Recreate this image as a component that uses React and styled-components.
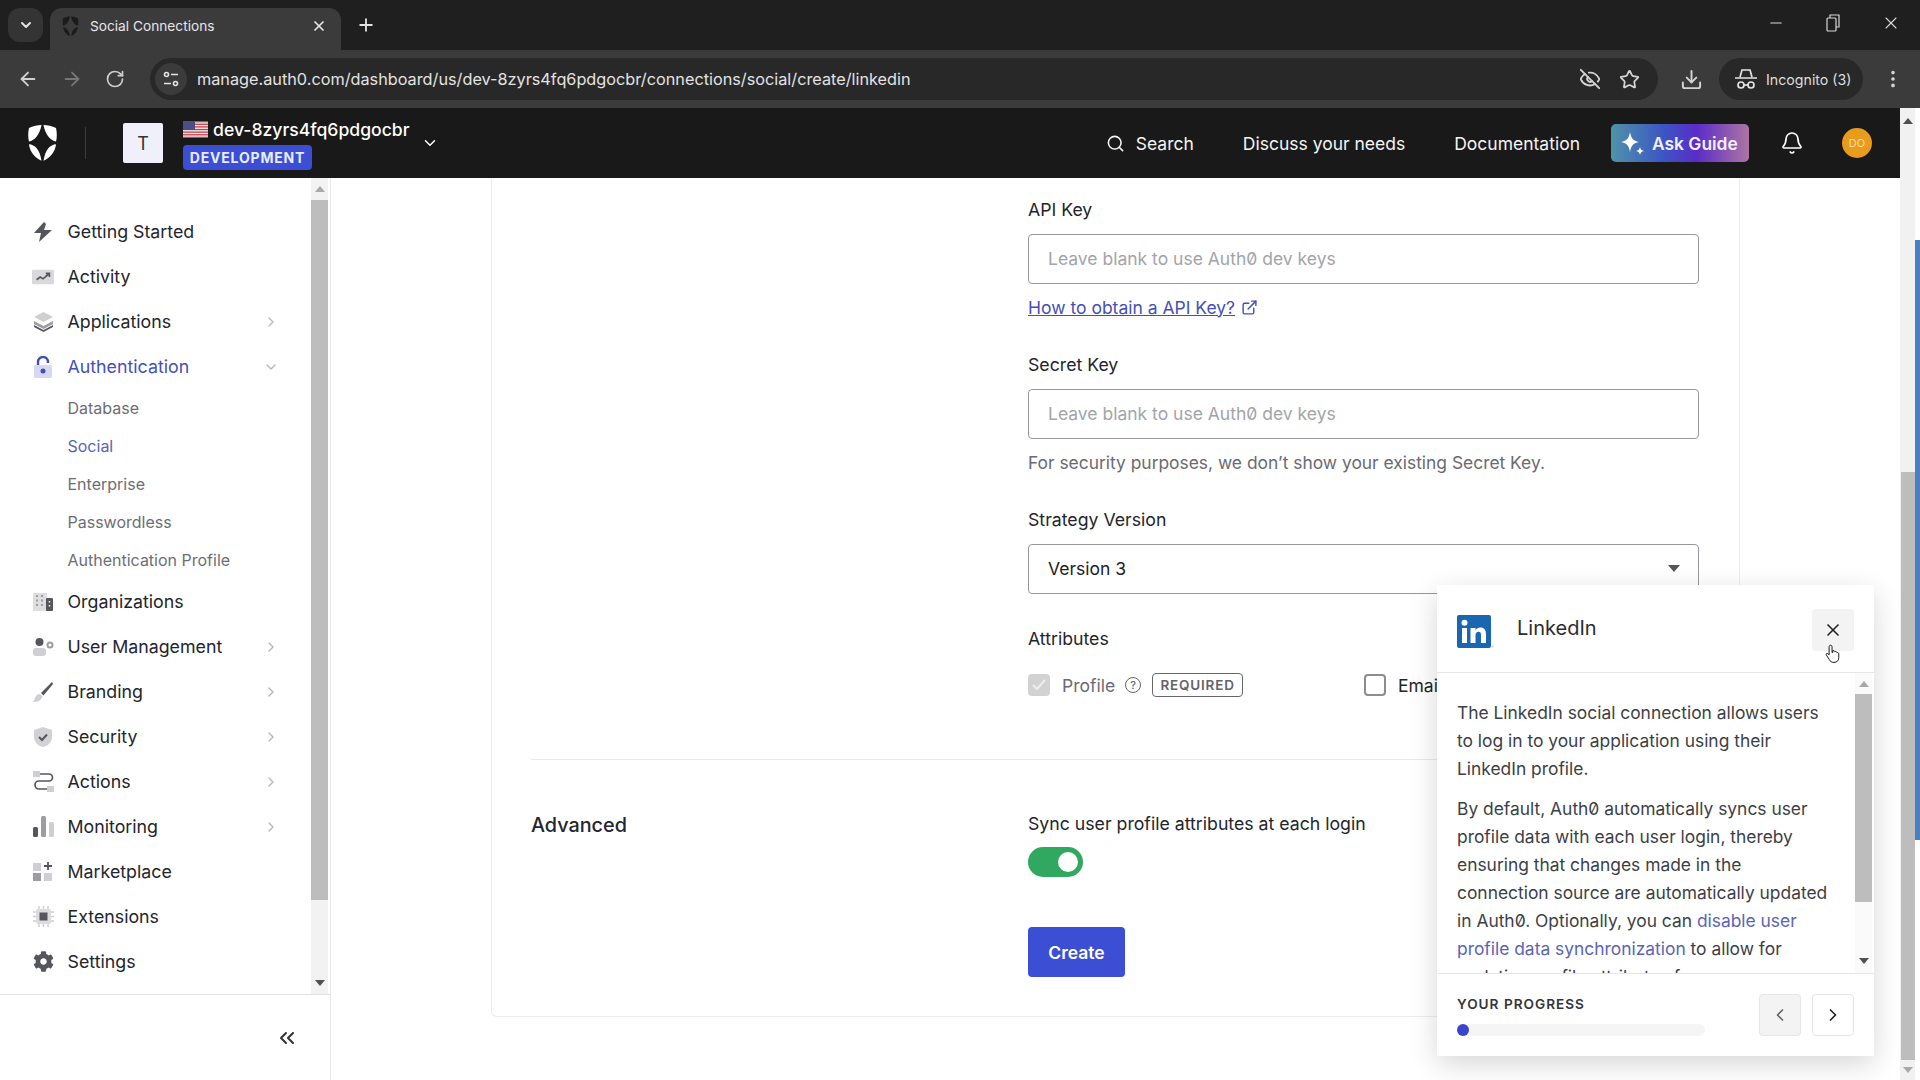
import React from "react";
import styled, { createGlobalStyle } from "styled-components";
import {
  ArrowLeft,
  ArrowRight,
  Bell,
  ChevronDown,
  ChevronLeft,
  ChevronRight,
  ChevronsLeft,
  Download,
  ExternalLink,
  EyeOff,
  Minus,
  MoreVertical,
  Plus,
  RotateCw,
  Search,
  Star,
  X,
} from "lucide-react";
import { FaCog } from "react-icons/fa";

const GlobalStyle = createGlobalStyle`
  html, body {
    margin: 0;
    padding: 0;
    background: #fff;
    overflow: hidden;
  }
  * {
    box-sizing: border-box;
  }
  body {
    font-family: Inter, "Liberation Sans", sans-serif;
    color: #1e212a;
    font-feature-settings: "zero";
  }
`;

const Page = styled.div`
  width: 1920px;
  height: 1080px;
  display: flex;
  flex-direction: column;
  overflow: hidden;
`;

/* browser chrome */
const TabStrip = styled.div`
  height: 50px;
  background: #1f1f1f;
  display: flex;
  align-items: flex-end;
  padding-left: 8px;
  color: #e3e3e3;
`;

const TabMenu = styled.div`
  width: 35px;
  height: 34px;
  margin-bottom: 8px;
  border-radius: 12px;
  background: #343434;
  display: flex;
  align-items: center;
  justify-content: center;
`;

const Tab = styled.div`
  width: 291px;
  height: 42px;
  margin-left: 7px;
  padding: 0 14px 6px 12px;
  background: #3b3b3b;
  border-radius: 12px 12px 0 0;
  display: flex;
  align-items: center;
  font-size: 13.7px;
  gap: 11px;
  color: #e6e6e6;
`;

const TabTitle = styled.span`
  flex: 1;
`;

const NewTab = styled.div`
  margin: 0 0 15px 15px;
  display: flex;
`;

const WindowButtons = styled.div`
  margin-left: auto;
  display: flex;
  align-items: center;
  gap: 41px;
  padding: 0 19px 17px 0;
`;

const Toolbar = styled.div`
  height: 58px;
  background: #3b3b3b;
  display: flex;
  align-items: center;
  padding: 0 0 0 17px;
  color: #d0d0d0;
`;

const NavIcons = styled.div`
  display: flex;
  align-items: center;
  gap: 22px;
  width: 133px;
`;

const Omnibox = styled.div`
  width: 1508px;
  height: 42px;
  border-radius: 21px;
  background: #282828;
  display: flex;
  align-items: center;
  padding: 0 18px 0 5px;
  color: #e3e3e3;
`;

const SiteButton = styled.div`
  width: 32px;
  height: 32px;
  border-radius: 50%;
  background: #3b3b3b;
  display: flex;
  align-items: center;
  justify-content: center;
  margin-right: 10px;
`;

const Url = styled.span`
  flex: 1;
  font-feature-settings: normal;
  font-size: 16.25px;
  color: #e3e3e3;
`;

const OmniIcons = styled.div`
  display: flex;
  align-items: center;
  gap: 18px;
`;

const ToolDownload = styled.div`
  margin-left: 22px;
  display: flex;
`;

const IncognitoPill = styled.div`
  width: 144px;
  height: 42px;
  margin-left: 16px;
  border-radius: 21px;
  background: #282828;
  display: flex;
  align-items: center;
  gap: 8px;
  padding-left: 15px;
  font-size: 14.2px;
  color: #dedede;
`;

const ToolMenu = styled.div`
  margin-left: 19px;
  display: flex;
`;

/* app frame */
const Workspace = styled.div`
  flex: 1;
  display: flex;
  min-height: 0;
`;

const Frame = styled.div`
  flex: 1;
  display: flex;
  flex-direction: column;
  min-width: 0;
`;

const AppBar = styled.header`
  height: 70px;
  background: #191919;
  display: flex;
  align-items: center;
  padding: 0 28px 0 27px;
  color: #fff;
`;

const BarDivider = styled.div`
  width: 1px;
  height: 32px;
  background: #3c3c3c;
  margin: 0 37px 0 27px;
`;

const TenantBox = styled.div`
  width: 40px;
  height: 40px;
  background: #f0f0fa;
  border-radius: 2px;
  color: #333;
  font-size: 18px;
  display: flex;
  align-items: center;
  justify-content: center;
  margin-right: 20px;
`;

const TenantInfo = styled.div`
  display: flex;
  flex-direction: column;
  gap: 5px;
  margin-top: 3px;
`;

const TenantName = styled.div`
  display: flex;
  align-items: center;
  gap: 5px;
  font-size: 17.6px;
  font-weight: 500;
  line-height: 20px;
`;

const EnvBadge = styled.div`
  width: 129px;
  height: 25px;
  background: #3c4fd4;
  border-radius: 4px;
  font-size: 14px;
  font-weight: 700;
  letter-spacing: 0.8px;
  color: #e9ecff;
  display: flex;
  align-items: center;
  justify-content: center;
`;

const TenantChevron = styled.div`
  margin-left: 11px;
  display: flex;
`;

const BarRight = styled.div`
  margin-left: auto;
  display: flex;
  align-items: center;
`;

const BarLink = styled.div`
  display: flex;
  align-items: center;
  gap: 11px;
  font-size: 17.5px;
  font-weight: 400;
  margin-right: ${(p) => p.$gap}px;
  color: #f4f4f4;
`;

const AskGuide = styled.div`
  width: 138px;
  height: 38px;
  border-radius: 5px;
  background: linear-gradient(90deg, #4f93a9 0%, #3c55c4 38%, #5a2cc8 62%, #ad75a3 100%);
  display: flex;
  align-items: center;
  gap: 6px;
  padding-left: 9px;
  font-size: 17.4px;
  font-weight: 600;
  color: #f2eefc;
  margin-right: 31px;
`;

const BellWrap = styled.div`
  display: flex;
  margin-right: 38px;
`;

const Avatar = styled.div`
  width: 30px;
  height: 30px;
  border-radius: 50%;
  background: #e89b1c;
  color: #f5d9a0;
  font-size: 11px;
  display: flex;
  align-items: center;
  justify-content: center;
`;

const Body = styled.div`
  flex: 1;
  display: flex;
  min-height: 0;
  position: relative;
`;

/* sidebar */
const Sidebar = styled.aside`
  width: 331px;
  flex: none;
  border-right: 1px solid #e8e8e8;
  display: flex;
  flex-direction: column;
`;

const SideScroll = styled.div`
  height: 817px;
  display: flex;
  border-bottom: 1px solid #e2e2e2;
  overflow: hidden;
`;

const Nav = styled.nav`
  flex: 1;
  padding: 31px 32px 0 32px;
  min-width: 0;
`;

const NavRow = styled.div`
  height: 45px;
  display: flex;
  align-items: center;
  gap: 13.5px;
  font-size: 17.8px;
  color: ${(p) => (p.$active ? "#4450b8" : "#23252d")};
`;

const NavLabel = styled.span`
  flex: 1;
`;

const SubRow = styled.div`
  height: 38px;
  padding-left: 35.5px;
  display: flex;
  align-items: center;
  font-size: 16px;
  color: ${(p) => (p.$active ? "#5a65b5" : "#6d6e75")};
`;

const IconBox = styled.span`
  width: 22px;
  height: 22px;
  flex: none;
  display: flex;
  align-items: center;
  justify-content: center;
  color: #55565c;
`;

const SideTrack = styled.div`
  width: 17px;
  margin-right: 2px;
  flex: none;
  background: #f2f2f2;
  display: flex;
  flex-direction: column;
  align-items: center;
`;

const TrackEnd = styled.div`
  height: ${(p) => p.$h}px;
  flex: none;
  display: flex;
  align-items: center;
  justify-content: center;
`;

const Thumb = styled.div`
  width: 100%;
  height: ${(p) => p.$h}px;
  background: #bdbdbd;
  flex: none;
`;

const TrackGap = styled.div`
  flex: 1;
`;

const Arrow = styled.span`
  width: 0;
  height: 0;
  border-left: ${(p) => p.$size || 5}px solid transparent;
  border-right: ${(p) => p.$size || 5}px solid transparent;
  ${(p) => (p.$up ? "border-bottom" : "border-top")}: ${(p) => (p.$size || 5) + 1}px solid ${(p) => p.$color || "#505050"};
`;

const SideFooter = styled.div`
  flex: 1;
  display: flex;
  align-items: center;
  justify-content: flex-end;
  padding-right: 31px;
  color: #333;
`;

/* main */
const Main = styled.main`
  flex: 1;
  min-width: 0;
  padding: 0 160px;
  overflow: hidden;
`;

const Card = styled.section`
  height: 839px;
  border: 1px solid #ececec;
  border-top: 0;
  border-radius: 0 0 6px 6px;
  padding: 0 39px 0 39px;
`;

const FormGrid = styled.div`
  display: grid;
  grid-template-columns: 497px 671px;
`;

const FieldStack = styled.div`
  grid-column: 2;
  padding-top: 20px;
`;

const Label = styled.div`
  font-size: 17.7px;
  line-height: 24px;
  margin-bottom: ${(p) => p.$mb ?? 12}px;
  color: #23252d;
`;

const Input = styled.input`
  display: block;
  width: 100%;
  height: 50px;
  padding: 0 19px 2px;
  border: 1px solid #97979d;
  border-radius: 4px;
  font: 400 17.5px Inter, sans-serif;
  font-feature-settings: "zero";
  background: #fff;
  outline: none;
  &::placeholder {
    color: #a3a4aa;
    opacity: 1;
  }
`;

const LinkRow = styled.a`
  display: flex;
  align-items: center;
  gap: 6px;
  height: 24px;
  margin-top: 11px;
  margin-bottom: 34px;
  font-size: 17.5px;
  color: #4450b8;
`;

const LinkText = styled.span`
  text-decoration: underline;
`;

const Help = styled.div`
  height: 24px;
  margin-top: 12px;
  margin-bottom: 33px;
  font-size: 17.4px;
  line-height: 24px;
  color: #6a6b73;
`;

const SelectBox = styled.div`
  height: 50px;
  padding: 0 18px 2px 19px;
  border: 1px solid #97979d;
  border-radius: 4px;
  display: flex;
  align-items: center;
  justify-content: space-between;
  font-size: 17.5px;
  margin-bottom: 33px;
`;

const CheckGrid = styled.div`
  display: grid;
  grid-template-columns: 336px 1fr;
  margin-top: 22px;
  height: 36px;
`;

const CheckItem = styled.div`
  display: flex;
  align-items: center;
  height: 24px;
  font-size: 17.5px;
  color: ${(p) => (p.$muted ? "#6b6c73" : "#23252d")};
`;

const CheckBox = styled.span`
  width: 22px;
  height: 22px;
  border-radius: 4px;
  margin-right: 12px;
  display: flex;
  align-items: center;
  justify-content: center;
  background: ${(p) => (p.$checked ? "#d2d2d2" : "#fff")};
  border: 2px solid ${(p) => (p.$checked ? "#d2d2d2" : "#8d8d8d")};
`;

const HelpDot = styled.span`
  width: 16px;
  height: 16px;
  margin: 0 11px 0 10px;
  border: 1.5px solid #66676e;
  border-radius: 50%;
  font-size: 11px;
  font-weight: 500;
  display: flex;
  align-items: center;
  justify-content: center;
  color: #66676e;
`;

const ReqTag = styled.span`
  width: 91px;
  height: 24px;
  border: 1px solid #66676e;
  border-radius: 4px;
  font-size: 13.5px;
  font-weight: 600;
  letter-spacing: 0.8px;
  color: #62636b;
  display: flex;
  align-items: center;
  justify-content: center;
`;

const Rule = styled.div`
  height: 1px;
  background: #e9e9e9;
  margin-top: 50px;
`;

const AdvancedRow = styled.div`
  display: grid;
  grid-template-columns: 497px 671px;
  padding-top: 52px;
`;

const SectionTitle = styled.h2`
  margin: 0;
  font-size: 19.8px;
  font-weight: 500;
  line-height: 26px;
  color: #23252d;
`;

const Toggle = styled.div`
  width: 55px;
  height: 30px;
  border-radius: 15px;
  background: #30a860;
  display: flex;
  align-items: center;
  justify-content: flex-end;
  padding-right: 5px;
`;

const Knob = styled.span`
  width: 20px;
  height: 20px;
  border-radius: 50%;
  background: #fff;
`;

const CreateButton = styled.button`
  display: block;
  width: 97px;
  height: 50px;
  margin-top: 50px;
  border: 0;
  border-radius: 4px;
  background: #3c4fd4;
  color: #fff;
  font: 600 17.5px Inter, sans-serif;
`;

/* help panel, floats over the page */
const Panel = styled.aside`
  position: absolute;
  top: 407px;
  right: 26px;
  width: 437px;
  height: 471px;
  background: #fff;
  box-shadow: 0 8px 26px rgba(0, 0, 0, 0.16);
  display: flex;
  flex-direction: column;
`;

const PanelHead = styled.div`
  height: 88px;
  flex: none;
  border-bottom: 1px solid #e6e6e6;
  display: flex;
  align-items: flex-start;
  padding: 25px 20px 0 20px;
`;

const LogoWrap = styled.div`
  margin-top: 5px;
  display: flex;
`;

const PanelTitle = styled.div`
  flex: 1;
  margin-left: 23px;
  font-size: 20px;
  line-height: 36px;
  color: #2a2c33;
`;

const SquareButton = styled.div`
  width: 42px;
  height: 42px;
  border-radius: 4px;
  background: ${(p) => (p.$grey ? "#f3f3f3" : "#fff")};
  border: 1px solid ${(p) => (p.$outlined ? "#e6e6e6" : "transparent")};
  display: flex;
  align-items: center;
  justify-content: center;
  color: #222;
  flex: none;
`;

const CloseWrap = styled.div`
  margin-top: -1px;
`;

const PanelMiddle = styled.div`
  height: 300px;
  flex: none;
  display: flex;
  overflow: hidden;
`;

const PanelText = styled.div`
  flex: 1;
  min-width: 0;
  padding: 26px 0 0 20px;
  font-size: 17.4px;
  line-height: 28px;
  color: #3d3f47;
`;

const Para = styled.p`
  margin: 0 0 12px;
  width: 378px;
`;

const PanelLink = styled.span`
  color: #5a65b5;
`;

const PanelTrack = styled.div`
  width: 17px;
  margin-right: 2px;
  flex: none;
  background: #fafafa;
  display: flex;
  flex-direction: column;
`;

const PanelFoot = styled.div`
  flex: 1;
  border-top: 1px solid #e6e6e6;
  display: flex;
  padding: 20px 20px 0 20px;
`;

const Progress = styled.div`
  flex: 1;
`;

const ProgressLabel = styled.div`
  font-size: 13.6px;
  font-weight: 600;
  letter-spacing: 1px;
  line-height: 20px;
  color: #33353c;
`;

const ProgressTrack = styled.div`
  width: 248px;
  height: 12px;
  margin-top: 10px;
  border-radius: 6px;
  background: #f5f5f5;
`;

const ProgressFill = styled.div`
  height: 12px;
  border-radius: 6px;
  background: #3c44cc;
`;

const StepButtons = styled.div`
  display: flex;
  gap: 11px;
`;

const Cursor = styled.svg`
  position: absolute;
  left: 1824px;
  top: 464px;
  width: 19px;
  height: 24px;
`;

/* page scrollbar */
const PageTrack = styled.div`
  width: 20px;
  flex: none;
  position: relative;
  background: linear-gradient(90deg, #f1f1f1 0, #f1f1f1 15px, #fff 15px);
  display: flex;
  flex-direction: column;
`;

const PageArrow = styled.div`
  width: 15px;
  height: ${(p) => p.$h}px;
  flex: none;
  display: flex;
  align-items: center;
  justify-content: center;
`;

const PageThumb = styled.div`
  width: 14px;
  margin-left: 1px;
  height: 588px;
  background: #bdbdbd;
  flex: none;
`;

const BlueEdge = styled.div`
  position: absolute;
  right: 0;
  top: 132px;
  width: 5px;
  height: 600px;
  background: #4a7fc4;
`;

function AuthLogo({ color = "#fff", size = 31 }) {
  return (
    <svg width={size} height={size * 1.22} viewBox="0 0 32 39" fill={color}>
      <path d="M15 1C11 1 6 2 2 4C1 9 1 14 2 18C8 17 13 11 15 1Z" />
      <path d="M17 1C21 1 26 2 30 4C31 9 31 14 30 18C24 17 19 11 17 1Z" />
      <path d="M2 21C8 21.5 13 26 15 38C8 35 3 29 2 21Z" />
      <path d="M30 21C24 21.5 19 26 17 38C24 35 29 29 30 21Z" />
    </svg>
  );
}

function Flag() {
  const stripes = [0, 2, 4, 6, 8, 10, 12];
  return (
    <svg width="25" height="17" viewBox="0 0 25 17">
      <rect width="25" height="17" fill="#f4eded" />
      {stripes.map((y) => (
        <rect key={y} y={y * 1.31} width="25" height="1.31" fill="#c2414f" />
      ))}
      <rect width="12" height="9" fill="#4a4f86" />
    </svg>
  );
}

function SiteIcon() {
  return (
    <svg width="18" height="18" viewBox="0 0 18 18" fill="none" stroke="#e3e3e3" strokeWidth="1.6">
      <circle cx="4.5" cy="4.5" r="2" />
      <path d="M9 4.5h7M2 13.5h7" />
      <circle cx="13.5" cy="13.5" r="2" />
    </svg>
  );
}

function Incognito() {
  return (
    <svg width="24" height="22" viewBox="0 0 24 22" fill="none" stroke="#e3e3e3" strokeWidth="1.7">
      <path d="M1 10h22M6 9l2-7h8l2 7" />
      <circle cx="7" cy="17" r="3" />
      <circle cx="17" cy="17" r="3" />
      <path d="M10 17h4" />
    </svg>
  );
}

function Restore() {
  return (
    <svg width="14" height="18" viewBox="0 0 14 18" fill="none" stroke="#d8d8d8" strokeWidth="1.2">
      <rect x="1" y="4" width="9" height="13" rx="1" />
      <path d="M4 4V1h9v12h-3" />
    </svg>
  );
}

function Sparkle() {
  return (
    <svg width="26" height="26" viewBox="0 0 26 26" fill="#fff">
      <path d="M10 2C11 8 13 11 19 12C13 13 11 16 10 22C9 16 7 13 1 12C7 11 9 8 10 2Z" />
      <path d="M20 17C20.400 19.500 21.500 20.600 24 21C21.500 21.400 20.400 22.500 20 25C19.600 22.500 18.500 21.400 16 21C18.500 20.600 19.600 19.500 20 17Z" />
    </svg>
  );
}

const DK = "#55565c";
const LT = "#cfcfd3";
const MD = "#9c9da2";

const navIcons = {
  bolt: (
    <svg width="22" height="22" viewBox="0 0 22 22" fill={DK}>
      <path d="M12 1L2 12h7l-2 9 13-12h-8l2-6z" />
    </svg>
  ),
  activity: (
    <svg width="24" height="16" viewBox="0 0 24 16">
      <rect width="24" height="16" rx="1.500" fill="#d9d9dc" />
      <path d="M5 11l4-3 3 2 6-5M15 4h4v4" fill="none" stroke={DK} strokeWidth="1.8" />
    </svg>
  ),
  apps: (
    <svg width="21" height="21" viewBox="0 0 21 21">
      <path d="M10.500 1L20 6l-9.500 5L1 6z" fill={LT} />
      <path d="M1 10l9.500 5 9.500-5v3l-9.500 5L1 13z" fill={MD} />
      <path d="M1 14l9.500 5 9.500-5v2l-9.500 5L1 16z" fill={DK} />
    </svg>
  ),
  lock: (
    <svg width="20" height="22" viewBox="0 0 20 22">
      <rect x="1" y="9" width="18" height="13" rx="1.500" fill="#d6d8f5" />
      <path d="M5 9V6a5 5 0 0 1 10 0v1" fill="none" stroke="#4450b8" strokeWidth="2.400" />
      <circle cx="10" cy="15" r="2.500" fill="#4450b8" />
    </svg>
  ),
  orgs: (
    <svg width="20" height="18" viewBox="0 0 20 18">
      <rect width="14" height="18" fill="#dedee0" />
      <path d="M3 3h2M8 3h2M3 7.500h2M8 7.500h2M3 12h2M8 12h2" stroke={MD} strokeWidth="2" />
      <rect x="13" y="5" width="7" height="13" rx="1" fill={DK} />
      <path d="M16.500 8v1.500M16.500 12v1.500" stroke="#fff" strokeWidth="1.500" />
    </svg>
  ),
  users: (
    <svg width="21" height="18" viewBox="0 0 21 18">
      <circle cx="6.500" cy="4" r="4" fill={DK} />
      <rect x="0" y="10" width="13" height="8" rx="3" fill={LT} />
      <circle cx="17" cy="7" r="2.500" fill="none" stroke={MD} strokeWidth="2" />
    </svg>
  ),
  brush: (
    <svg width="22" height="22" viewBox="0 0 22 22">
      <path d="M20 1L9 12l2.500 2.500L21 3z" fill={DK} />
      <path d="M8 13l2.500 2.500C9.500 19 6 21 1 21c2-2 1.500-4 3-6 1-1.200 2.500-1.800 4-2z" fill={LT} />
    </svg>
  ),
  shield: (
    <svg width="20" height="22" viewBox="0 0 20 22">
      <path d="M10 1l9 3v7c0 5-4 9-9 10C5 20 1 16 1 11V4z" fill="#d2d2d6" />
      <path d="M6 11l3 3 5-5.500" fill="none" stroke={DK} strokeWidth="2" />
    </svg>
  ),
  actions: (
    <svg width="21" height="21" viewBox="0 0 21 21">
      <rect width="7" height="6" fill={LT} />
      <rect x="14" y="15" width="7" height="6" fill={LT} />
      <path d="M7 3h9a3.500 3.500 0 0 1 0 7H6a3.500 3.500 0 0 0 0 8h8" fill="none" stroke={DK} strokeWidth="1.700" />
    </svg>
  ),
  bars: (
    <svg width="21" height="21" viewBox="0 0 21 21">
      <rect x="0" y="11" width="5" height="10" rx="1.500" fill={DK} />
      <rect x="8" y="0" width="5" height="21" rx="1.500" fill={MD} />
      <rect x="16" y="6" width="5" height="15" rx="1.500" fill={LT} />
    </svg>
  ),
  market: (
    <svg width="20" height="20" viewBox="0 0 20 20">
      <rect x="0" y="1" width="8" height="8" fill={LT} />
      <rect x="0" y="11" width="8" height="8" fill={MD} />
      <rect x="11" y="11" width="8" height="8" fill={LT} />
      <path d="M15 0v8M11 4h8" stroke={DK} strokeWidth="1.800" />
    </svg>
  ),
  chip: (
    <svg width="21" height="21" viewBox="0 0 21 21">
      <rect x="3" y="3" width="15" height="15" rx="2" fill="#dcdcde" />
      <path d="M6 0v3M10.500 0v3M15 0v3M6 18v3M10.500 18v3M15 18v3M0 6h3M0 10.500h3M0 15h3M18 6h3M18 10.500h3M18 15h3" stroke={LT} strokeWidth="1.500" />
      <rect x="6.500" y="6.500" width="8" height="8" fill={DK} />
    </svg>
  ),
  gear: <FaCog size={21} color={DK} />,
  support: (
    <svg width="22" height="24" viewBox="0 0 22 24">
      <circle cx="11" cy="12" r="11" fill={DK} />
    </svg>
  ),
};

function SideItem({ icon, label, chevron, active }) {
  return (
    <NavRow $active={active}>
      <IconBox>{navIcons[icon]}</IconBox>
      <NavLabel>{label}</NavLabel>
      {chevron === "right" && <ChevronRight size={16} color="#b8b8b8" />}
      {chevron === "down" && <ChevronDown size={16} color="#b8b8b8" />}
    </NavRow>
  );
}

function LinkedInLogo() {
  return (
    <svg width="37" height="33" viewBox="0 0 37 33">
      <rect width="34" height="33" rx="2" fill="#1a66b0" />
      <rect x="5" y="13" width="5" height="15" fill="#fff" />
      <circle cx="7.500" cy="7.800" r="3" fill="#fff" />
      <path d="M13.500 13h5v2.200c1-1.600 2.600-2.600 4.800-2.600 4 0 5.700 2.400 5.700 6.600V28h-5v-7.800c0-2.400-.7-3.400-2.500-3.400s-3 1.200-3 3.600V28h-5z" fill="#fff" />
      <circle cx="35.500" cy="31.500" r="1" fill="#b9cde2" />
    </svg>
  );
}

export default function App() {
  return (
    <Page>
      <GlobalStyle />
      <TabStrip>
        <TabMenu>
          <ChevronDown size={16} strokeWidth={3} />
        </TabMenu>
        <Tab>
          <AuthLogo color="#1b1b1b" size={17} />
          <TabTitle>Social Connections</TabTitle>
          <X size={16} strokeWidth={2.6} />
        </Tab>
        <NewTab>
          <Plus size={20} strokeWidth={2.2} />
        </NewTab>
        <WindowButtons>
          <Minus size={18} strokeWidth={1.4} color="#d8d8d8" />
          <Restore />
          <X size={20} strokeWidth={1.3} color="#d8d8d8" />
        </WindowButtons>
      </TabStrip>
      <Toolbar>
        <NavIcons>
          <ArrowLeft size={22} color="#cfcfcf" />
          <ArrowRight size={22} color="#767676" />
          <RotateCw size={20} color="#cfcfcf" />
        </NavIcons>
        <Omnibox>
          <SiteButton>
            <SiteIcon />
          </SiteButton>
          <Url>manage.auth0.com/dashboard/us/dev-8zyrs4fq6pdgocbr/connections/social/create/linkedin</Url>
          <OmniIcons>
            <EyeOff size={22} color="#d5d5d5" />
            <Star size={21} color="#d5d5d5" />
          </OmniIcons>
        </Omnibox>
        <ToolDownload>
          <Download size={23} color="#d5d5d5" />
        </ToolDownload>
        <IncognitoPill>
          <Incognito />
          Incognito (3)
        </IncognitoPill>
        <ToolMenu>
          <MoreVertical size={22} color="#d5d5d5" />
        </ToolMenu>
      </Toolbar>
      <Workspace>
        <Frame>
          <AppBar>
            <AuthLogo />
            <BarDivider />
            <TenantBox>T</TenantBox>
            <TenantInfo>
              <TenantName>
                <Flag />
                dev-8zyrs4fq6pdgocbr
              </TenantName>
              <EnvBadge>DEVELOPMENT</EnvBadge>
            </TenantInfo>
            <TenantChevron>
              <ChevronDown size={18} />
            </TenantChevron>
            <BarRight>
              <BarLink $gap={49}>
                <Search size={19} />
                Search
              </BarLink>
              <BarLink $gap={49}>Discuss your needs</BarLink>
              <BarLink $gap={31}>Documentation</BarLink>
              <AskGuide>
                <Sparkle />
                Ask Guide
              </AskGuide>
              <BellWrap>
                <Bell size={24} strokeWidth={1.7} />
              </BellWrap>
              <Avatar>DO</Avatar>
            </BarRight>
          </AppBar>
          <Body>
            <Sidebar>
              <SideScroll>
                <Nav>
                  <SideItem icon="bolt" label="Getting Started" />
                  <SideItem icon="activity" label="Activity" />
                  <SideItem icon="apps" label="Applications" chevron="right" />
                  <SideItem icon="lock" label="Authentication" chevron="down" active />
                  <SubRow>Database</SubRow>
                  <SubRow $active>Social</SubRow>
                  <SubRow>Enterprise</SubRow>
                  <SubRow>Passwordless</SubRow>
                  <SubRow>Authentication Profile</SubRow>
                  <SideItem icon="orgs" label="Organizations" />
                  <SideItem icon="users" label="User Management" chevron="right" />
                  <SideItem icon="brush" label="Branding" chevron="right" />
                  <SideItem icon="shield" label="Security" chevron="right" />
                  <SideItem icon="actions" label="Actions" chevron="right" />
                  <SideItem icon="bars" label="Monitoring" chevron="right" />
                  <SideItem icon="market" label="Marketplace" />
                  <SideItem icon="chip" label="Extensions" />
                  <SideItem icon="gear" label="Settings" />
                  <SideItem icon="support" />
                </Nav>
                <SideTrack>
                  <TrackEnd $h={22}>
                    <Arrow $up $color="#a8a8a8" />
                  </TrackEnd>
                  <Thumb $h={700} />
                  <TrackGap />
                  <TrackEnd $h={22}>
                    <Arrow />
                  </TrackEnd>
                </SideTrack>
              </SideScroll>
              <SideFooter>
                <ChevronsLeft size={24} />
              </SideFooter>
            </Sidebar>
            <Main>
              <Card>
                <FormGrid>
                  <FieldStack>
                    <Label>API Key</Label>
                    <Input placeholder="Leave blank to use Auth0 dev keys" />
                    <LinkRow>
                      <LinkText>How to obtain a API Key?</LinkText>
                      <ExternalLink size={17} />
                    </LinkRow>
                    <Label>Secret Key</Label>
                    <Input placeholder="Leave blank to use Auth0 dev keys" />
                    <Help>For security purposes, we don’t show your existing Secret Key.</Help>
                    <Label>Strategy Version</Label>
                    <SelectBox>
                      Version 3
                      <Arrow $color="#555" $size={6} />
                    </SelectBox>
                    <Label $mb={0}>Attributes</Label>
                    <CheckGrid>
                      <CheckItem $muted>
                        <CheckBox $checked>
                          <svg width="14" height="12" viewBox="0 0 14 12" fill="none" stroke="#eee" strokeWidth="2">
                            <path d="M1 6l4 4 8-9" />
                          </svg>
                        </CheckBox>
                        Profile
                        <HelpDot>?</HelpDot>
                        <ReqTag>REQUIRED</ReqTag>
                      </CheckItem>
                      <CheckItem>
                        <CheckBox />
                        Email
                      </CheckItem>
                    </CheckGrid>
                  </FieldStack>
                </FormGrid>
                <Rule />
                <AdvancedRow>
                  <SectionTitle>Advanced</SectionTitle>
                  <div>
                    <Label $mb={11}>Sync user profile attributes at each login</Label>
                    <Toggle>
                      <Knob />
                    </Toggle>
                    <CreateButton>Create</CreateButton>
                  </div>
                </AdvancedRow>
              </Card>
            </Main>
            <Panel>
              <PanelHead>
                <LogoWrap>
                  <LinkedInLogo />
                </LogoWrap>
                <PanelTitle>LinkedIn</PanelTitle>
                <CloseWrap>
                  <SquareButton $grey>
                    <X size={20} strokeWidth={2} />
                  </SquareButton>
                </CloseWrap>
              </PanelHead>
              <PanelMiddle>
                <PanelText>
                  <Para>
                    The LinkedIn social connection allows users to log in to your application using their LinkedIn
                    profile.
                  </Para>
                  <Para>
                    By default, Auth0 automatically syncs user profile data with each user login, thereby ensuring that
                    changes made in the connection source are automatically updated in Auth0. Optionally, you can{" "}
                    <PanelLink>disable user profile data synchronization</PanelLink> to allow for updating profile
                    attributes from
                  </Para>
                </PanelText>
                <PanelTrack>
                  <TrackEnd $h={21}>
                    <Arrow $up $color="#a8a8a8" />
                  </TrackEnd>
                  <Thumb $h={208} />
                  <TrackGap />
                  <TrackEnd $h={24}>
                    <Arrow />
                  </TrackEnd>
                </PanelTrack>
              </PanelMiddle>
              <PanelFoot>
                <Progress>
                  <ProgressLabel>YOUR PROGRESS</ProgressLabel>
                  <ProgressTrack>
                    <ProgressFill style={{ width: `${(1 / 21) * 100}%` }} />
                  </ProgressTrack>
                </Progress>
                <StepButtons>
                  <SquareButton $grey $outlined>
                    <ChevronLeft size={20} color="#666" />
                  </SquareButton>
                  <SquareButton $outlined>
                    <ChevronRight size={20} />
                  </SquareButton>
                </StepButtons>
              </PanelFoot>
            </Panel>
            <Cursor viewBox="0 0 26 28">
              <path
                d="M9 2c1.200 0 2 .8 2 2v8l1-.2V9.500c1.500-.6 2.500 0 2.500 1.300l.8-.1c1.300-.4 2.200.2 2.300 1.400 1.500-.4 2.600.4 2.600 1.900v5c0 4-2.400 6.500-6.500 6.500-3.500 0-5-1.300-6.500-4l-4-6c-1-1.600.8-3 2.200-1.800L7 15V4c0-1.200.8-2 2-2z"
                fill="#fff"
                stroke="#111"
                strokeWidth="1.300"
              />
            </Cursor>
          </Body>
        </Frame>
        <PageTrack>
          <PageArrow $h={26}>
            <Arrow $up $color="#505050" />
          </PageArrow>
          <PageArrow $h={338} />
          <PageThumb />
          <PageArrow $h={20}>
            <Arrow $color="#a8a8a8" />
          </PageArrow>
          <BlueEdge />
        </PageTrack>
      </Workspace>
    </Page>
  );
}
